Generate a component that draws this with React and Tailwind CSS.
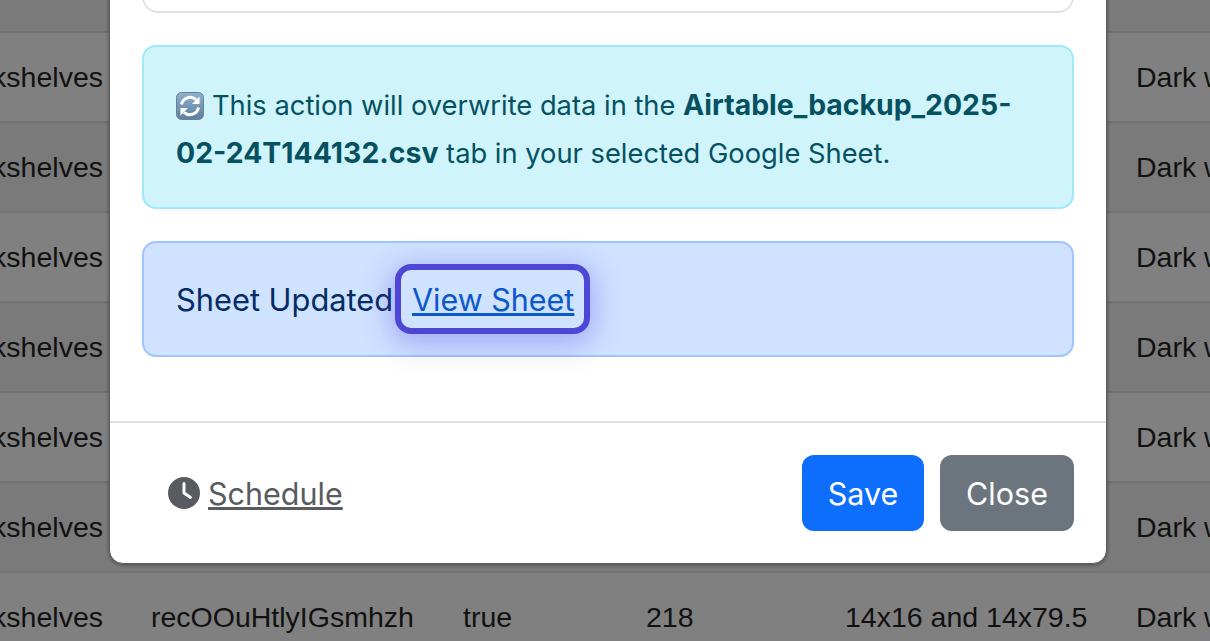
import React from 'react';

const rowTops = [0, 1, 2, 3, 4, 5, 6, 7];

// 表格行（背景，被遮罩压暗）
const TableRow = ({ last, striped }) => (
  <div
    className={`flex h-[90px] shrink-0 items-center border-b-2 border-[#6f7276] whitespace-nowrap text-[28.5px] text-[#111] ${
      striped ? 'bg-[#7a7a7a]' : 'bg-[#808080]'
    }`}
  >
    <div className="flex w-[103px] shrink-0 justify-end overflow-hidden">Bookshelves</div>
    <div className="ml-[48px] w-[312px] shrink-0">{last ? 'recOOuHtlyIGsmhzh' : ''}</div>
    <div className="w-[183px] shrink-0">{last ? 'true' : ''}</div>
    <div className="w-[199px] shrink-0">{last ? '218' : ''}</div>
    <div className="w-[291px] shrink-0">{last ? '14x16 and 14x79.5' : ''}</div>
    <div>Dark wood</div>
  </div>
);

const SyncEmoji = () => (
  <svg viewBox="0 0 28 28" className="mr-[8px] inline-block h-[28px] w-[28px] align-[-5px]">
    <defs>
      <linearGradient id="syncBg" x1="0" y1="0" x2="0" y2="1">
        <stop offset="0" stopColor="#8fb0d0" />
        <stop offset="1" stopColor="#5f7f9f" />
      </linearGradient>
    </defs>
    <rect x="0.5" y="0.5" width="27" height="27" rx="5" fill="url(#syncBg)" stroke="#6d7f92" />
    <path d="M5.5 12.5A8.8 8.8 0 0 1 20 7.6" fill="none" stroke="#fff" strokeWidth="3" />
    <path d="M23.5 4.5v7.5h-7.5z" fill="#fff" />
    <path d="M22.5 15.5A8.8 8.8 0 0 1 8 20.4" fill="none" stroke="#fff" strokeWidth="3" />
    <path d="M4.5 23.5V16h7.5z" fill="#fff" />
  </svg>
);

const ClockIcon = () => (
  <svg viewBox="0 0 32 32" className="h-[32px] w-[32px] shrink-0">
    <circle cx="16" cy="16" r="16" fill="#585c60" />
    <path d="M16 6.5V16l6.5 4.5" fill="none" stroke="#fff" strokeWidth="3" strokeLinecap="round" strokeLinejoin="round" />
  </svg>
);

export default function App() {
  return (
    <div className="relative h-[641px] w-full overflow-hidden bg-[#7a7a7a] font-['Liberation_Sans',sans-serif]">
      {/* 背景表格 */}
      <div className="flex flex-col">
        <div className="h-[33px] shrink-0 border-b-2 border-[#6f7276] bg-[#7a7a7a]" />
        {rowTops.map((i) => (
          <TableRow key={i} last={i === 6} striped={i % 2 === 1} />
        ))}
      </div>

      {/* 弹窗 */}
      <div className="absolute top-[-100px] left-[109px] flex h-[664px] w-[998px] flex-col rounded-[14px] border border-[#5c5c5c] bg-white font-['Inter',sans-serif] shadow-[0_1px_3px_1px_rgba(0,0,0,0.25)]">
        <div className="flex flex-1 flex-col px-[32px]">
          <div className="h-[112px] shrink-0 rounded-b-[16px] border-2 border-t-0 border-[#dee2e6]" />
          <div className="mt-[32px] h-[164px] shrink-0 rounded-[14px] border-2 border-[#9eeaf9] bg-[#cff4fc] px-[32px] py-[35px] text-[27.3px] leading-[48px] text-[#055160]">
            <SyncEmoji />
            This action will overwrite data in the <strong className="text-[28.4px] leading-[40px] font-bold">Airtable_backup_2025-02-24T144132.csv</strong> tab in your selected Google Sheet.
          </div>
          <div className="mt-[32px] flex h-[116px] shrink-0 items-center rounded-[14px] border-2 border-[#9ec5fe] bg-[#cfe2ff] pl-[32px] text-[30.5px] text-[#052c65]">
            <span className="w-[219px] shrink-0 pt-[2px] text-[30.8px] whitespace-nowrap">Sheet Updated</span>
            <a
              href="#"
              className="rounded-[16px] border-[6px] border-[#4f46d5] pt-[2px] pr-[10px] pl-[11px] leading-[56px] text-[#0a58ca] underline shadow-[0_6px_28px_4px_rgba(79,70,229,0.35)]"
            >
              View Sheet
            </a>
          </div>
        </div>
        <div className="flex h-[142px] shrink-0 items-center justify-between border-t-2 border-[#dee2e6] pr-[32px] pl-[58px]">
          <a href="#" className="flex items-center gap-[8px] text-[30.5px] text-[#585c60]">
            <ClockIcon />
            <span className="pt-[2px] underline">Schedule</span>
          </a>
          <div className="flex gap-[16px]">
            <button className="h-[76px] w-[122px] rounded-[12px] bg-[#0d6efd] pt-[2px] text-[30.5px] text-white">Save</button>
            <button className="h-[76px] w-[134px] rounded-[12px] bg-[#6c757d] pt-[2px] text-[30.5px] text-white">Close</button>
          </div>
        </div>
      </div>
    </div>
  );
}
